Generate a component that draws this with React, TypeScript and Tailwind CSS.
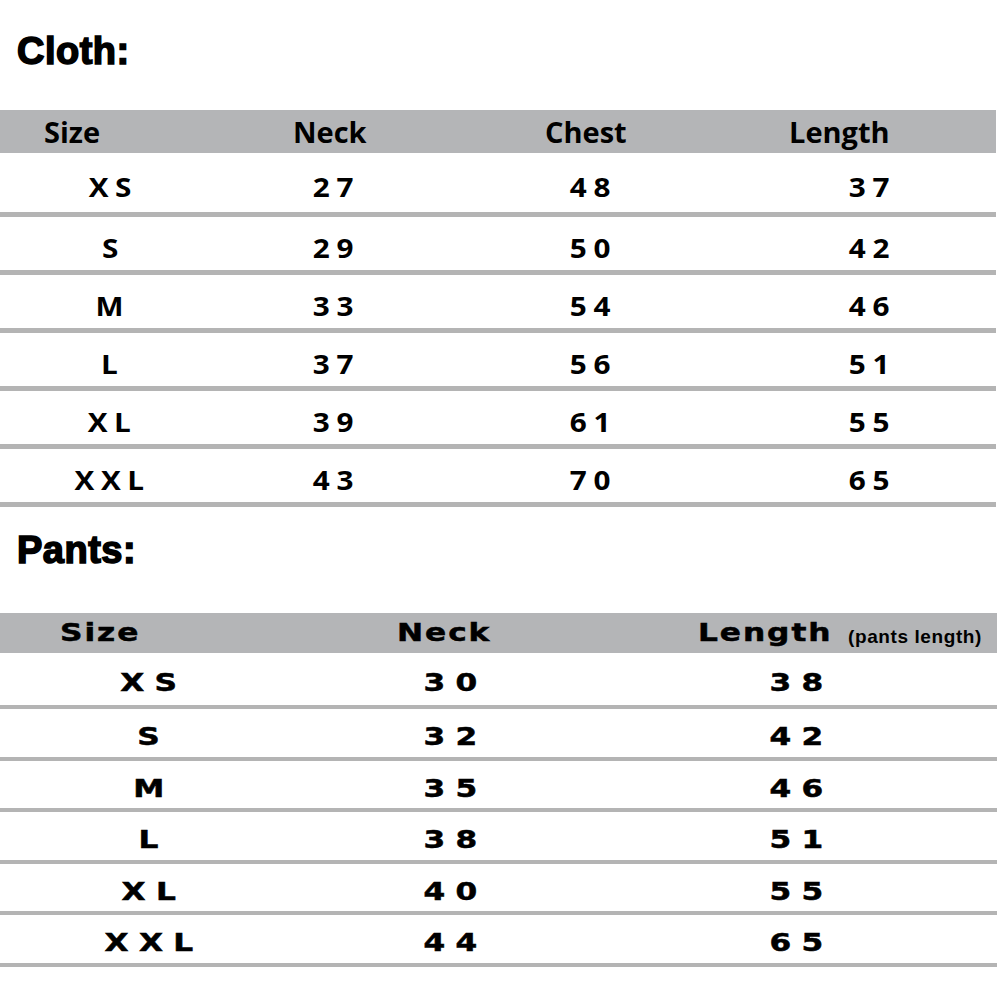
import React from 'react';

const clothRows = [
  { size: 'XS', neck: '27', chest: '48', length: '37', h: 'h-[64px]' },
  { size: 'S', neck: '29', chest: '50', length: '42', h: 'h-[58px]' },
  { size: 'M', neck: '33', chest: '54', length: '46', h: 'h-[58px]' },
  { size: 'L', neck: '37', chest: '56', length: '51', h: 'h-[58px]' },
  { size: 'XL', neck: '39', chest: '61', length: '55', h: 'h-[58px]' },
  { size: 'XXL', neck: '43', chest: '70', length: '65', h: 'h-[58px]' },
];

const pantsRows = [
  { size: 'XS', neck: '30', length: '38', h: 'h-[56px]' },
  { size: 'S', neck: '32', length: '42', h: 'h-[52px]' },
  { size: 'M', neck: '35', length: '46', h: 'h-[51px]' },
  { size: 'L', neck: '38', length: '51', h: 'h-[52px]' },
  { size: 'XL', neck: '40', length: '55', h: 'h-[51px]' },
  { size: 'XXL', neck: '44', length: '65', h: 'h-[52px]' },
];

const titleFont = "font-['Liberation_Sans',Arial,sans-serif] font-bold text-[38px] leading-none tracking-[0.5px] [-webkit-text-stroke:1.6px_black]";
const clothFont = "font-['Open_Sans','Noto_Sans',sans-serif] font-bold";
const pantsFont = "font-['DejaVu_Sans',Verdana,sans-serif] font-bold";

// cloth value cell, letters spaced out
const ClothVal = ({ v }: { v: string }) => (
  <div className="flex justify-center">
    <span className={`${clothFont} text-[27px] leading-none tracking-[0.22em] -mr-[0.22em] inline-block scale-x-110`}>{v}</span>
  </div>
);

const PantsVal = ({ v }: { v: string }) => (
  <div className="flex justify-center">
    <span className={`${pantsFont} text-[24px] leading-none tracking-[0.33em] -mr-[0.33em] inline-block scale-x-[1.3] [-webkit-text-stroke:0.5px_black]`}>{v}</span>
  </div>
);

const App = () => {
  return (
    <div className="w-[1000px] h-[1000px] overflow-hidden bg-white text-black">
      {/* Cloth */}
      <h1 className={`${titleFont} pt-[32px] pl-[17px] h-[70px]`}>Cloth:</h1>

      <div className="mt-[40px] w-[996px]">
        <div className={`${clothFont} text-[29px] leading-none h-[43px] bg-[#b4b5b7] grid grid-cols-[250px_251px_245px_1fr] items-center`}>
          <span className="pl-[44px]">Size</span>
          <span className="pl-[43px]">Neck</span>
          <span className="pl-[44px]">Chest</span>
          <span className="pl-[43px]">Length</span>
        </div>
        {clothRows.map((r) => (
          <div
            key={r.size}
            className={`${r.h} border-b-[5px] border-[#b4b4b4] grid grid-cols-[220px_226px_288px_1fr] items-center pt-2`}
          >
            <ClothVal v={r.size} />
            <ClothVal v={r.neck} />
            <ClothVal v={r.chest} />
            <div className="pl-2">
              <ClothVal v={r.length} />
            </div>
          </div>
        ))}
      </div>

      {/* Pants */}
      <h1 className={`${titleFont} mt-[24px] pl-[17px] h-[38px]`}>Pants:</h1>

      <div className="mt-[44px] w-[997px]">
        <div className="h-[40px] bg-[#b4b5b7] grid grid-cols-[337px_301px_150px_1fr] items-center pl-[60px]">
          <span className={`${pantsFont} text-[24px] leading-none tracking-[1.5px] inline-block origin-left scale-x-[1.3] [-webkit-text-stroke:0.5px_black]`}>Size</span>
          <span className={`${pantsFont} text-[24px] leading-none tracking-[1.5px] inline-block origin-left scale-x-[1.3] [-webkit-text-stroke:0.5px_black]`}>Neck</span>
          <span className={`${pantsFont} text-[24px] leading-none tracking-[1.5px] inline-block origin-left scale-x-[1.3] [-webkit-text-stroke:0.5px_black]`}>Length</span>
          <span className="font-['Liberation_Sans',Arial,sans-serif] font-bold text-[19px] leading-none tracking-[0.6px] pt-[6px]">(pants length)</span>
        </div>
        {pantsRows.map((r) => (
          <div
            key={r.size}
            className={`${r.h} border-b-4 border-[#b4b4b4] grid grid-cols-[300px_304px_1fr] items-center pt-2`}
          >
            <PantsVal v={r.size} />
            <PantsVal v={r.neck} />
            <div className="pr-[6px]">
              <PantsVal v={r.length} />
            </div>
          </div>
        ))}
      </div>
    </div>
  );
};

export default App;
